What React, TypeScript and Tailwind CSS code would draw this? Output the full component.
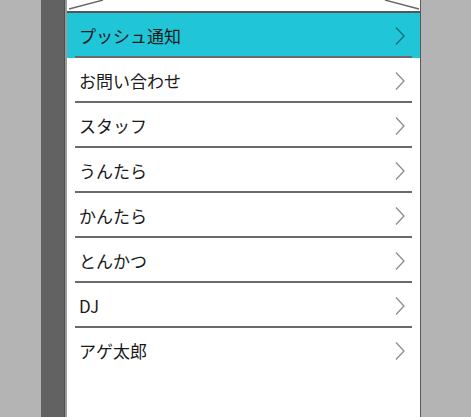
import React from 'react';

const items = ['プッシュ通知', 'お問い合わせ', 'スタッフ', 'うんたら', 'かんたら', 'とんかつ', 'DJ', 'アゲ太郎'];

const Chevron: React.FC = () => (
  <svg width="12" height="20" viewBox="0 0 12 20" className="text-black/45">
    <path d="M2 1.5 L10 10 L2 18.5" fill="none" stroke="currentColor" strokeWidth="1.3" />
  </svg>
);

export default function App() {
  return (
    <div className="w-[471px] h-[417px] bg-[#b4b4b4] flex overflow-hidden" style={{ fontFamily: '"Noto Sans CJK JP", "Noto Sans", sans-serif' }}>
      <div className="w-[41px]" />
      <div className="w-[24px] bg-[#626262] border-r-[1px] border-[#4e4e4e]" />
      <div className="w-[356px] bg-white border-l-[2px] border-l-[#9a9a9a] border-r-[1px] border-r-[#5a5a5a] flex flex-col">
        {/* Header edge */}
        <div className="h-[11px] relative">
          <svg width="354" height="11" className="absolute inset-0">
            <line x1="2" y1="9" x2="36" y2="0" stroke="#666" strokeWidth="1.3" />
            <line x1="318" y1="0" x2="352" y2="9" stroke="#666" strokeWidth="1.3" />
          </svg>
        </div>
        <div className="h-[2px] bg-[#555]" />

        {items.map((label, i) => (
          <div key={label} className={`h-[45px] flex flex-col ${i === 0 ? 'bg-[#21c5d8]' : ''}`}>
            <div className="flex-1 flex items-center justify-between pl-[12px] pr-[14px] pt-[2px]">
              <span className="text-[17px] text-[#1a1a1a] leading-none">{label}</span>
              <Chevron />
            </div>
            {i < items.length - 1 ? <div className="h-[2px] mx-[8px] bg-[#6a6a6a]" /> : <div className="h-[2px]" />}
          </div>
        ))}
      </div>
    </div>
  );
}
